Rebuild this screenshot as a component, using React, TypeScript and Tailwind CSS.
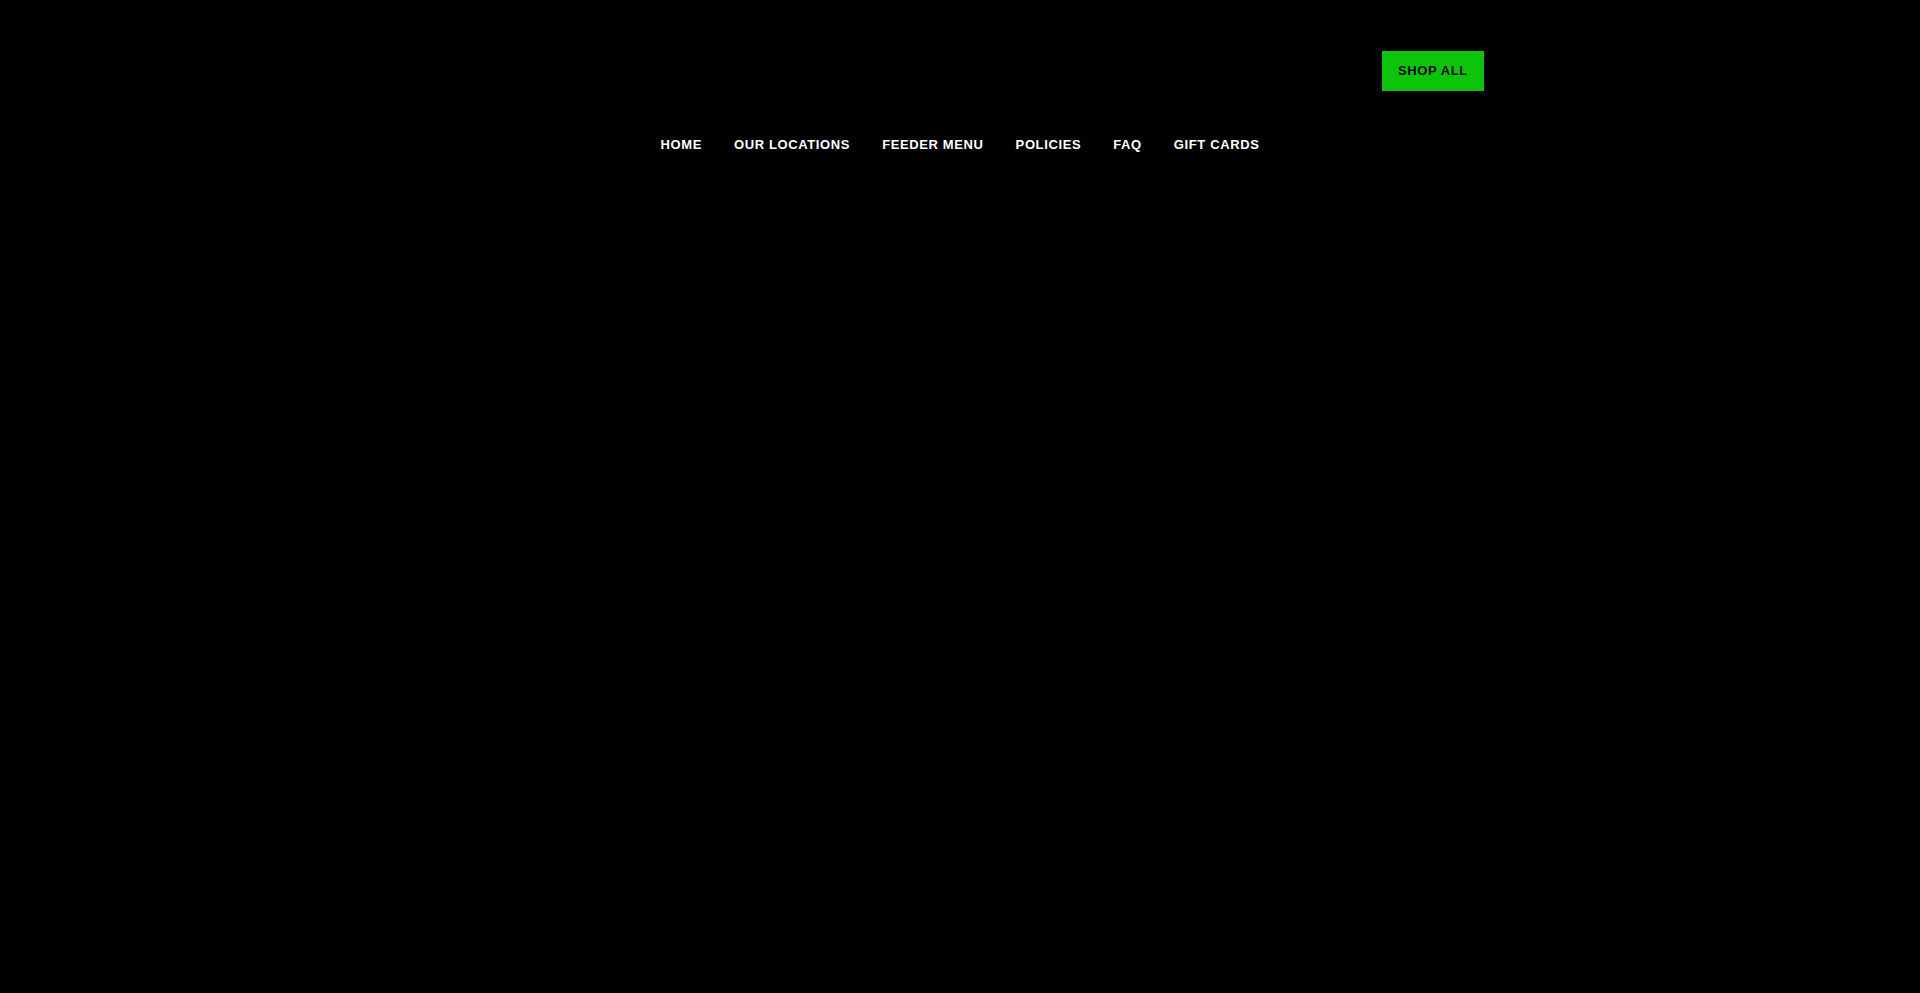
import React from 'react';

const navItems = ['HOME', 'OUR LOCATIONS', 'FEEDER MENU', 'POLICIES', 'FAQ', 'GIFT CARDS'];

export default function App() {
    return (
        <div className="min-h-screen w-full bg-black font-['Liberation_Sans',Arial,sans-serif]">
            <header className="mx-auto w-[1048px]">
                {/* Top bar */}
                <div className="flex justify-end pt-[51px]">
                    <a
                        href="#"
                        className="flex h-[40px] w-[102px] items-center justify-center bg-[#0cc40c] text-[13px] font-bold tracking-[0.6px] text-[#0a0a0a]"
                    >
                        SHOP ALL
                    </a>
                </div>

                {/* Navigation */}
                <nav className="mt-[44px] flex justify-center gap-[32px]">
                    {navItems.map((item) => (
                        <a
                            key={item}
                            href="#"
                            className="text-[13px] font-bold leading-[20px] tracking-[0.62px] text-white"
                        >
                            {item}
                        </a>
                    ))}
                </nav>
            </header>
        </div>
    );
}
